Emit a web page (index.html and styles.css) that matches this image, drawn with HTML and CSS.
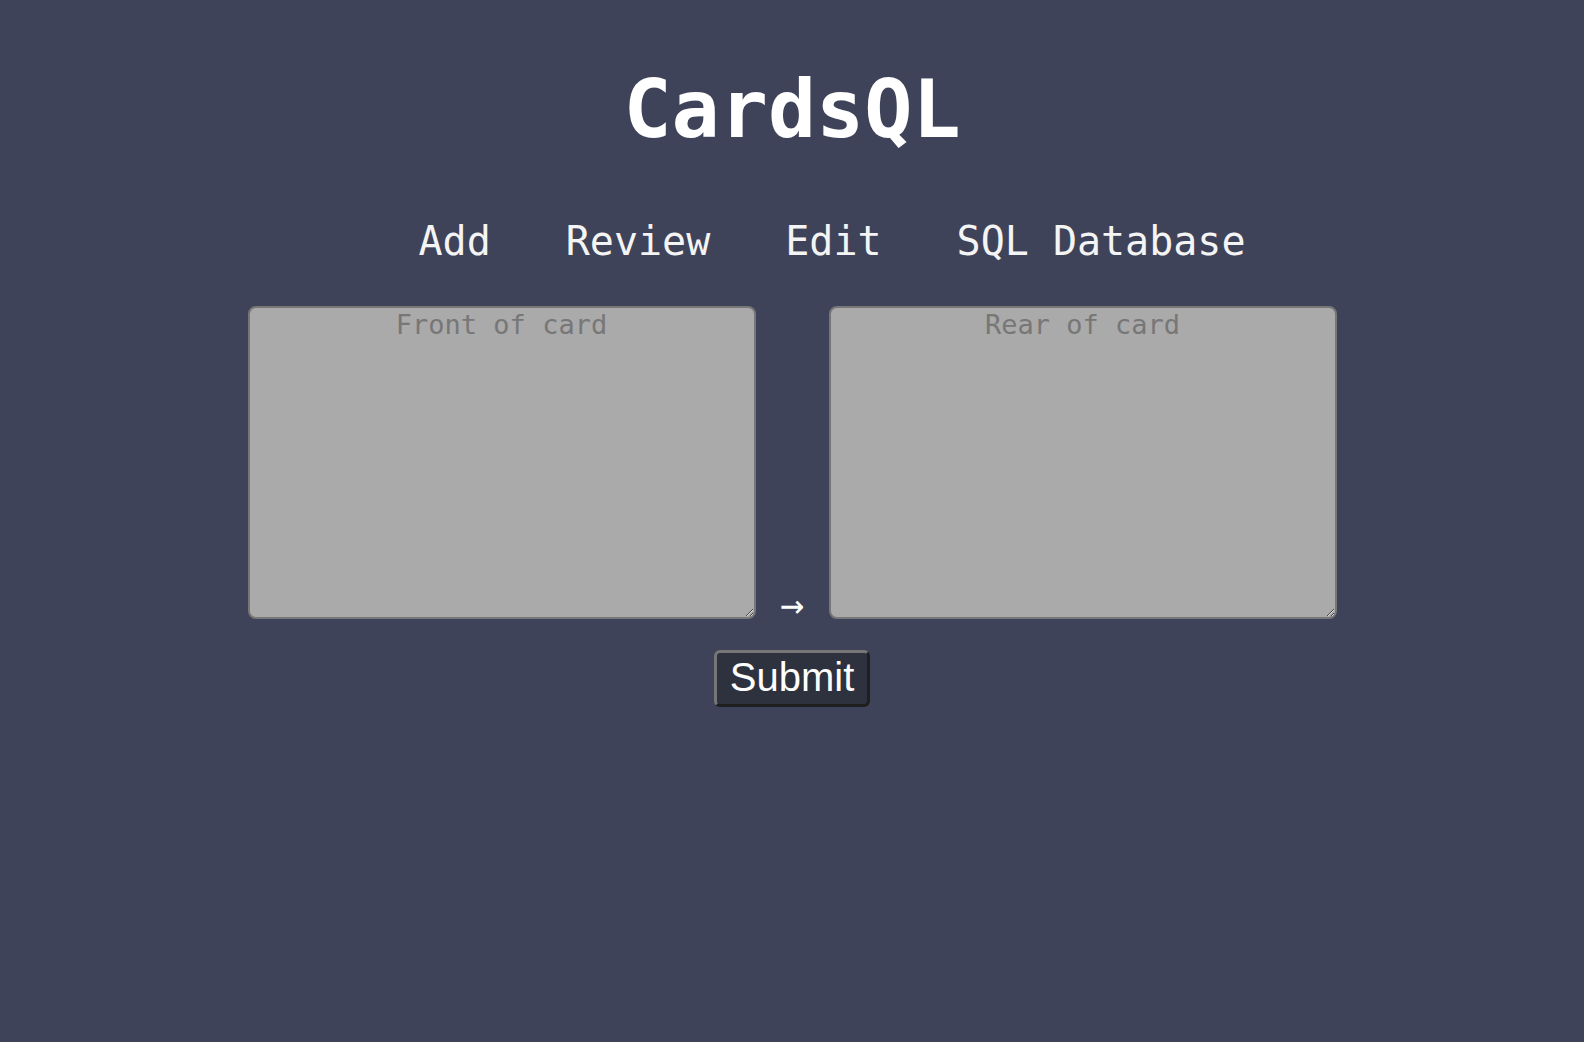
FILE: index.html
```html
<!DOCTYPE html>
<html lang="en">
<head>
<meta charset="utf-8">
<title>CardsQL</title>
<link rel="stylesheet" href="styles.css">
</head>
<body>
<main class="page">
  <h1 class="title">CardsQL</h1>
  <nav class="nav">
    <a class="nav-link" href="#">Add</a>
    <a class="nav-link" href="#">Review</a>
    <a class="nav-link" href="#">Edit</a>
    <a class="nav-link" href="#">SQL Database</a>
  </nav>
  <form class="card-form">
    <div class="card-row">
      <textarea class="card-text" placeholder="Front of card"></textarea>
      <span class="arrow">→</span>
      <textarea class="card-text" placeholder="Rear of card"></textarea>
    </div>
    <button class="submit" type="button">Submit</button>
  </form>
</main>
</body>
</html>
```

FILE: styles.css
```css
html, body {
  margin: 0;
  padding: 0;
  background: #3f4359;
  height: 100%;
}

.page {
  padding-top: 63px;
  display: flex;
  flex-direction: column;
  align-items: center;
  font-family: "DejaVu Sans Mono", monospace;
  color: #ffffff;
}

.title {
  margin: 0;
  font-size: 80px;
  line-height: 93px;
  font-weight: bold;
  font-family: "DejaVu Sans Mono", monospace;
}

.nav {
  margin-top: 62px;
  display: flex;
  gap: 75px;
  padding-left: 80px;
  font-size: 40px;
  line-height: 47px;
}

.nav-link {
  color: #f4f4f4;
  text-decoration: none;
}

.card-form {
  margin-top: 41px;
  display: flex;
  flex-direction: column;
  align-items: center;
}

.card-row {
  display: flex;
  align-items: flex-end;
}

.card-text {
  box-sizing: border-box;
  width: 508px;
  height: 313px;
  margin: 0;
  padding: 1px 2px;
  background: #aaaaaa;
  border: 2px solid #777777;
  border-radius: 8px;
  font-family: "DejaVu Sans Mono", monospace;
  font-size: 27px;
  text-align: center;
  color: #333;
  outline: none;
}

.card-text::placeholder {
  color: #777777;
}

.arrow {
  width: 73px;
  text-align: center;
  font-size: 40px;
  line-height: 22px;
  color: #ffffff;
  padding-bottom: 4px;
}

.submit {
  margin-top: 31px;
  box-sizing: border-box;
  width: 156px;
  height: 57px;
  padding: 0 0 3px 0;
  font-family: "Liberation Sans", Arial, sans-serif;
  font-size: 40px;
  color: #ffffff;
  background: #2d323e;
  border: 3px solid;
  border-color: #767676 #1f1f1f #1f1f1f #767676;
  border-radius: 6px;
}
```
